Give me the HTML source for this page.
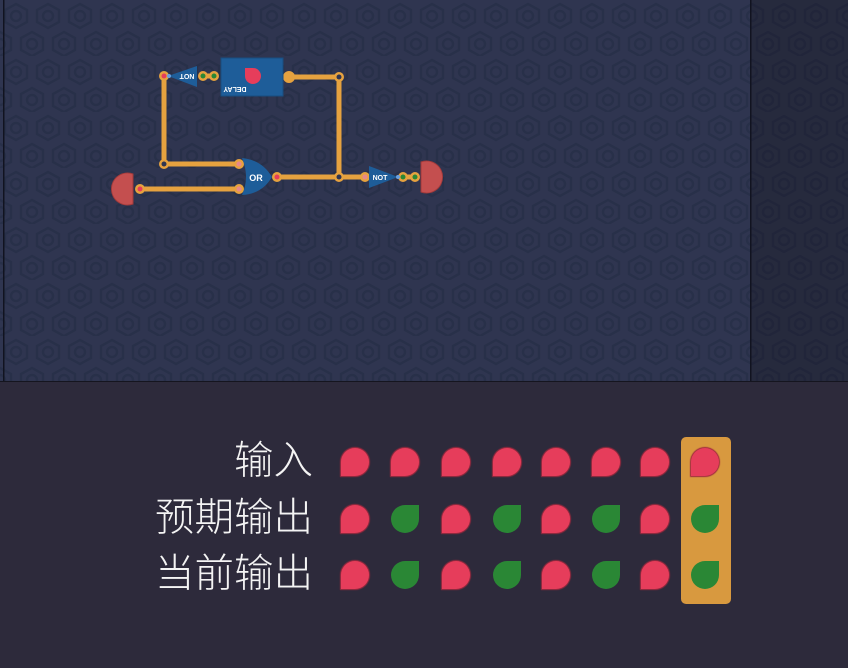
<!DOCTYPE html>
<html><head><meta charset="utf-8"><style>
html,body{margin:0;padding:0;width:848px;height:667px;overflow:hidden;background:#2d2a3b}
#top{position:absolute;left:0;top:0;width:848px;height:381px}
#bot{position:absolute;left:0;top:381px;width:848px;height:286px;background:#2d2a3b;border-top:1px solid #15151f}
.lbl{position:absolute;right:535px;font-family:"Liberation Sans","Noto Sans CJK SC",sans-serif;font-size:39.5px;font-weight:300;color:#f4f4f4;line-height:1;white-space:nowrap}
.d{position:absolute;width:28px;height:28px;box-sizing:border-box}
.r{background:#e63d5b;border-radius:50% 50% 50% 0;box-shadow:0 0 1px 1px #a02a3f}
.g{background:#2a8735;border-radius:50% 0 50% 50%}
#hl{position:absolute;left:681px;top:437px;width:50px;height:167px;background:#d8993f;border-radius:5px}
</style></head><body>
<div id="top">
<svg width="848" height="381" xmlns="http://www.w3.org/2000/svg">
<defs>
<pattern id="hx" width="32" height="56" patternUnits="userSpaceOnUse">
<rect width="32" height="56" fill="#2f3550"/>
<g fill="none" stroke="#283049" stroke-width="2.5">
<polygon points="16,4 27,10 27,22 16,28 5,22 5,10"/>
<circle cx="16" cy="16" r="5"/>
<polygon points="0,32 11,38 11,50 0,56 -11,50 -11,38"/>
<polygon points="32,32 43,38 43,50 32,56 21,50 21,38"/>
<circle cx="0" cy="44" r="5"/><circle cx="32" cy="44" r="5"/>
</g></pattern>
<pattern id="hx2" width="32" height="56" patternUnits="userSpaceOnUse">
<rect width="32" height="56" fill="#262a3d"/>
<g fill="none" stroke="#21253a" stroke-width="2.5">
<polygon points="16,4 27,10 27,22 16,28 5,22 5,10"/>
<circle cx="16" cy="16" r="5"/>
<polygon points="0,32 11,38 11,50 0,56 -11,50 -11,38"/>
<polygon points="32,32 43,38 43,50 32,56 21,50 21,38"/>
<circle cx="0" cy="44" r="5"/><circle cx="32" cy="44" r="5"/>
</g></pattern>
</defs>
<rect width="848" height="381" fill="url(#hx)"/>
<rect x="751" width="97" height="381" fill="url(#hx2)"/>
<rect x="3" y="0" width="1.5" height="381" fill="#111320"/>
<rect x="750" y="0" width="1.5" height="381" fill="#111320"/>
<g stroke="#e6a23f" stroke-width="5" fill="none" stroke-linecap="round">
<polyline points="164,76 164,164 239,164"/>
<polyline points="289,77 339,77 339,177"/>
<line x1="277" y1="177" x2="365" y2="177"/>
<line x1="140" y1="189" x2="239" y2="189"/>
<line x1="403" y1="177" x2="415" y2="177"/>
<line x1="203" y1="76" x2="214" y2="76"/>
</g>
<g fill="#e6a23f">
<circle cx="164" cy="76" r="5"/><circle cx="164" cy="164" r="5"/><circle cx="339" cy="77" r="5"/>
<circle cx="339" cy="177" r="5"/><circle cx="289" cy="77" r="6"/><circle cx="239" cy="164" r="5"/>
<circle cx="239" cy="189" r="5"/><circle cx="277" cy="177" r="5"/><circle cx="140" cy="189" r="5"/>
<circle cx="365" cy="177" r="5"/><circle cx="203" cy="76" r="5"/><circle cx="214" cy="76" r="5"/>
<circle cx="403" cy="177" r="5"/><circle cx="415" cy="177" r="5"/>
</g>
<g fill="#2f3550"><circle cx="164" cy="164" r="2.5"/><circle cx="339" cy="77" r="2.5"/><circle cx="339" cy="177" r="2.5"/></g>
<g fill="#e63d5b"><circle cx="164" cy="76" r="2.5"/><circle cx="277" cy="177" r="2.5"/><circle cx="140" cy="189" r="2.5"/></g>
<g fill="#e8888a"><circle cx="239" cy="164" r="2.5"/><circle cx="239" cy="189" r="2.5"/><circle cx="365" cy="177" r="2.5"/></g>
<g fill="#2a8735"><circle cx="203" cy="76" r="2.5"/><circle cx="214" cy="76" r="2.5"/><circle cx="403" cy="177" r="2.5"/><circle cx="415" cy="177" r="2.5"/></g>
<polygon points="197,66 197,87 168,76" fill="#1e5d99"/>
<circle cx="169" cy="76" r="2" fill="#6aa0e0"/>
<text x="187" y="79" font-family="Liberation Sans" font-size="7" font-weight="bold" fill="#fff" text-anchor="middle" transform="rotate(180 187 76.5)">NOT</text>
<rect x="221" y="58" width="62" height="38" fill="#1e5d99" stroke="#184d80"/>
<path d="M253 68 L261 68 L261 76 A8 8 0 1 1 253 68 Z" fill="#e63d5b" transform="rotate(-90 253 76)"/>
<text x="235" y="92" font-family="Liberation Sans" font-size="7" font-weight="bold" fill="#fff" text-anchor="middle" transform="rotate(180 235 89.5)">DELAY</text>
<path d="M242 158 Q262 160 272 177 Q262 194 242 195 Q250 177 242 158 Z" fill="#1e5d99"/>
<text x="256" y="181" font-family="Liberation Sans" font-size="9" font-weight="bold" fill="#fff" text-anchor="middle">OR</text>
<polygon points="369,166 369,188 398,177" fill="#1e5d99"/>
<circle cx="398" cy="177" r="2" fill="#6aa0e0"/>
<text x="380" y="180" font-family="Liberation Sans" font-size="7" font-weight="bold" fill="#fff" text-anchor="middle">NOT</text>
<path d="M133 174 A16 16 0 1 0 133 204 Z" fill="#c44f4f" stroke="#a23a3a"/>
<path d="M421 162 A16 16 0 1 1 421 192 Z" fill="#c44f4f" stroke="#a23a3a"/>
</svg>
</div>
<div id="bot"></div>
<div id="hl"></div>
<div class="lbl" style="top:442px">输入</div>
<div class="lbl" style="top:499px">预期输出</div>
<div class="lbl" style="top:555px">当前输出</div>
<div id="drops"></div>
<script>
var xs=[355,405,456,507,556,606,655,705],ys=[462,519,575];
var pat=["rrrrrrrr","rgrgrgrg","rgrgrgrg"];
var h="";
for(var i=0;i<3;i++)for(var j=0;j<8;j++){
h+='<div class="d '+pat[i][j]+'" style="left:'+(xs[j]-14)+'px;top:'+(ys[i]-14)+'px"></div>';}
document.getElementById("drops").innerHTML=h;
</script>
</body></html>
